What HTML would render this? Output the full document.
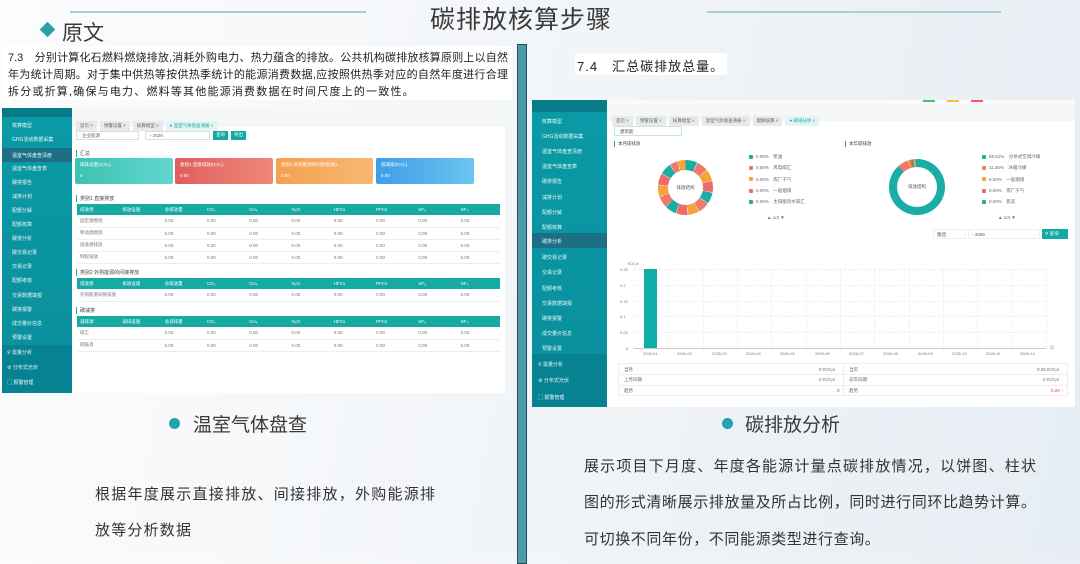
<!DOCTYPE html>
<html><head><meta charset="utf-8"><style>
*{margin:0;padding:0;box-sizing:border-box}
body{width:1080px;height:555px;overflow:hidden;position:relative;font-family:"Liberation Sans","Noto Sans CJK SC",sans-serif;background:linear-gradient(100deg,#fbfcfd 0%,#f2f5f8 50%,#e6edf3 100%);color:#333}
.a{position:absolute}
.j{position:absolute;white-space:nowrap;text-align:justify;text-align-last:justify}
.sb div{position:absolute;left:0;width:100%;font-size:5px;color:#e8f8f8;padding-left:10px;white-space:nowrap}
.tag{display:inline-block;background:#e9e9e9;font-size:4.5px;color:#666;padding:2px 4px;margin-right:3px}
table{border-collapse:collapse;position:absolute;font-size:4.5px;color:#777;table-layout:fixed}
th{background:#15aaa3;color:#fff;font-weight:normal;text-align:left;padding-left:3px;height:11px}
td{border-bottom:1px solid #eee;height:12px;padding-left:3px;background:#fff}
.card{position:absolute;top:158px;height:26px;color:#fff;font-size:4.5px;padding:4px 5px;border-radius:2px}
.lg{position:absolute;font-size:4.5px;color:#666;white-space:nowrap}
.lg i{display:inline-block;width:4px;height:4px;border-radius:1px;margin-right:3px;vertical-align:middle}
.gv{position:absolute;top:269px;height:79px;border-left:1px dashed #eee}
.gh{position:absolute;left:634px;width:412px;border-top:1px dashed #eee}
.yl{position:absolute;left:620px;font-size:4px;color:#777}
.xl{position:absolute;top:351px;font-size:4px;color:#777}
</style></head><body>
<div class="a" style="left:70px;top:11px;width:296px;height:2px;background:#a8ced6"></div>
<div class="a" style="left:707px;top:11px;width:294px;height:2px;background:#a8ced6"></div>
<div class="a" style="left:430px;top:0px;font-size:25px;color:#3a3a3a;letter-spacing:1px">碳排放核算步骤</div>
<div class="a" style="left:42px;top:24px;width:11px;height:11px;background:#2aa1a8;transform:rotate(45deg)"></div>
<div class="a" style="left:62px;top:17px;font-size:21px;color:#3a3a3a">原文</div>
<div class="a" style="left:2px;top:46px;width:510px;height:54px;background:#fff"></div>
<div class="j" style="left:8px;top:49px;width:500px;font-size:11px;color:#222">7.3　分别计算化石燃料燃烧排放,消耗外购电力、热力蕴含的排放。公共机构碳排放核算原则上以自然</div>
<div class="j" style="left:8px;top:66px;width:500px;font-size:11px;color:#222">年为统计周期。对于集中供热等按供热季统计的能源消费数据,应按照供热季对应的自然年度进行合理</div>
<div class="a" style="left:8px;top:83px;font-size:11px;color:#222;letter-spacing:1.2px;white-space:nowrap">拆分或折算,确保与电力、燃料等其他能源消费数据在时间尺度上的一致性。</div>
<div class="a" style="left:575px;top:53px;width:152px;height:22px;background:#fff"></div>
<div class="a" style="left:577px;top:56px;font-size:13px;color:#222;letter-spacing:1px">7.4　汇总碳排放总量。</div>
<div class="a" style="left:517px;top:44px;width:10px;height:520px;background:#4b9ba9;border:1px solid #244f58"></div>

<!-- LEFT APP -->
<div class="a" style="left:2px;top:108px;width:503px;height:285px;background:#fff"></div>
<div class="a sb" style="left:2px;top:108px;width:70px;height:285px;background:linear-gradient(#0a9aa6,#0a8e9c)">
<div style="top:0;height:9px;background:#087b88"></div>
<div style="top:14px">核算模型</div><div style="top:28px">GHG活动数据采集</div>
<div style="top:40px;height:14px;background:#1d6f86;padding-top:4px">温室气体盘查清册</div>
<div style="top:57px">温室气体盘查表</div><div style="top:71px">碳排报告</div><div style="top:85px">减排计划</div><div style="top:99px">配额分解</div><div style="top:113px">配额核算</div><div style="top:127px">碳排分析</div><div style="top:141px">碳交易记录</div><div style="top:155px">交易记录</div><div style="top:169px">配额考核</div><div style="top:184px">交易数据填报</div><div style="top:198px">碳排报警</div><div style="top:212px">成交量价信息</div><div style="top:226px">预警设置</div>
<div style="top:237px;height:48px;background:#078292"></div>
<div style="top:241px;padding-left:5px">⚲ 需量分析</div><div style="top:256px;padding-left:5px">⚙ 分布式光伏</div><div style="top:271px;padding-left:5px">▢ 报警管理</div>
</div>
<div class="a" style="left:72px;top:108px;width:433px;height:19px;background:#f5f6f6;padding:6px 4px"><span class="tag">首页 ×</span><span class="tag">预警设置 ×</span><span class="tag">核算模型 ×</span><span class="tag" style="background:#e2f4f3;color:#1aa">● 温室气体盘查清册 ×</span></div>
<div class="a" style="left:76px;top:131px;width:63px;height:9px;border:1px solid #ddd;font-size:4.5px;color:#666;padding:1px 5px">企业能源</div>
<div class="a" style="left:145px;top:131px;width:65px;height:9px;border:1px solid #ddd;font-size:4.5px;color:#666;padding:1px 4px">▫ 2026</div>
<div class="a" style="left:213px;top:131px;width:15px;height:9px;background:#12a9a1;font-size:4.5px;color:#fff;padding:1px 3px">查询</div>
<div class="a" style="left:231px;top:131px;width:15px;height:9px;background:#12a9a1;font-size:4.5px;color:#fff;padding:1px 3px">导出</div>
<div class="a" style="left:76px;top:150px;font-size:5px;color:#444;border-left:1px solid #1aa;padding-left:3px">汇总</div>
<div class="card" style="left:75px;width:98px;background:linear-gradient(90deg,#3cc2b2,#62d6cf)">碳排总量(tCO₂)<br><br>0</div>
<div class="card" style="left:175px;width:98px;background:linear-gradient(90deg,#e05d5d,#f0887a)">类别1 直接排放(tCO₂)<br><br>0.00</div>
<div class="card" style="left:276px;width:97px;background:linear-gradient(90deg,#f4a04f,#f7b874)">类别2 外购能源的间接排放(t...<br><br>0.00</div>
<div class="card" style="left:376px;width:98px;background:linear-gradient(90deg,#3d9ee8,#6cc4f0)">碳减排(tCO₂)<br><br>0.00</div>
<div class="a" style="left:76px;top:195px;font-size:5px;color:#444;border-left:1px solid #1aa;padding-left:3px">类别1 直接排放</div>
<table style="left:77px;top:204px;width:423px"><tr><th>排放源</th><th>排放设施</th><th>总排放量</th><th>CO₂</th><th>CH₄</th><th>N₂O</th><th>HFCs</th><th>PFCs</th><th>SF₆</th><th>NF₃</th></tr>
<tr><td>固定源燃烧</td><td></td><td>0.00</td><td>0.00</td><td>0.00</td><td>0.00</td><td>0.00</td><td>0.00</td><td>0.00</td><td>0.00</td></tr>
<tr><td>移动源燃烧</td><td></td><td>0.00</td><td>0.00</td><td>0.00</td><td>0.00</td><td>0.00</td><td>0.00</td><td>0.00</td><td>0.00</td></tr>
<tr><td>逃逸源排放</td><td></td><td>0.00</td><td>0.00</td><td>0.00</td><td>0.00</td><td>0.00</td><td>0.00</td><td>0.00</td><td>0.00</td></tr>
<tr><td>制程排放</td><td></td><td>0.00</td><td>0.00</td><td>0.00</td><td>0.00</td><td>0.00</td><td>0.00</td><td>0.00</td><td>0.00</td></tr></table>
<div class="a" style="left:76px;top:269px;font-size:5px;color:#444;border-left:1px solid #1aa;padding-left:3px">类别2 外购能源的间接排放</div>
<table style="left:77px;top:278px;width:423px"><tr><th>排放源</th><th>排放设施</th><th>总排放量</th><th>CO₂</th><th>CH₄</th><th>N₂O</th><th>HFCs</th><th>PFCs</th><th>SF₆</th><th>NF₃</th></tr>
<tr><td>外购能源间接排放</td><td></td><td>0.00</td><td>0.00</td><td>0.00</td><td>0.00</td><td>0.00</td><td>0.00</td><td>0.00</td><td>0.00</td></tr></table>
<div class="a" style="left:76px;top:307px;font-size:5px;color:#444;border-left:1px solid #1aa;padding-left:3px">碳减排</div>
<table style="left:77px;top:316px;width:423px"><tr><th>减排源</th><th>减排设施</th><th>总减排量</th><th>CO₂</th><th>CH₄</th><th>N₂O</th><th>HFCs</th><th>PFCs</th><th>SF₆</th><th>NF₃</th></tr>
<tr><td>碳汇</td><td></td><td>0.00</td><td>0.00</td><td>0.00</td><td>0.00</td><td>0.00</td><td>0.00</td><td>0.00</td><td>0.00</td></tr>
<tr><td>碳抵消</td><td></td><td>0.00</td><td>0.00</td><td>0.00</td><td>0.00</td><td>0.00</td><td>0.00</td><td>0.00</td><td>0.00</td></tr></table>

<!-- RIGHT APP -->
<div class="a" style="left:532px;top:100px;width:543px;height:307px;background:#fff"></div>
<div class="a" style="left:607px;top:100px;width:468px;height:5px;background:#fafafa"></div>
<div class="a" style="left:923px;top:100px;width:12px;height:2px;background:#3c6"></div>
<div class="a" style="left:947px;top:100px;width:12px;height:2px;background:#fb3"></div>
<div class="a" style="left:971px;top:100px;width:12px;height:2px;background:#f55"></div>
<div class="a sb" style="left:532px;top:100px;width:75px;height:307px;background:linear-gradient(#0a9aa6,#0a8e9c)">
<div style="top:0;height:12px;background:#087b88"></div>
<div style="top:18px">核算模型</div><div style="top:33px">GHG活动数据采集</div><div style="top:48px">温室气体盘查清册</div><div style="top:63px">温室气体盘查表</div><div style="top:78px">碳排报告</div><div style="top:94px">减排计划</div><div style="top:109px">配额分解</div><div style="top:124px">配额核算</div>
<div style="top:133px;height:15px;background:#1d6f86;padding-top:5px">碳排分析</div>
<div style="top:154px">碳交易记录</div><div style="top:169px">交易记录</div><div style="top:185px">配额考核</div><div style="top:200px">交易数据填报</div><div style="top:215px">碳排报警</div><div style="top:230px">成交量价信息</div><div style="top:245px">预警设置</div>
<div style="top:254px;height:53px;background:#078292"></div>
<div style="top:261px;padding-left:6px">⚲ 需量分析</div><div style="top:277px;padding-left:6px">⚙ 分布式光伏</div><div style="top:294px;padding-left:6px">▢ 报警管理</div>
</div>
<div class="a" style="left:607px;top:105px;width:468px;height:16px;background:#f5f6f6;padding:4px 5px"><span class="tag">首页 ×</span><span class="tag">预警设置 ×</span><span class="tag">核算模型 ×</span><span class="tag">温室气体盘查清册 ×</span><span class="tag">配额核算 ×</span><span class="tag" style="background:#e2f4f3;color:#1aa">● 碳排分析 ×</span></div>
<div class="a" style="left:614px;top:126px;width:68px;height:10px;border:1px solid #bfe6e6;font-size:4.5px;color:#555;padding:2px 5px">建筑能</div>
<div class="a" style="left:614px;top:141px;font-size:4.5px;color:#444;border-left:1px solid #1aa;padding-left:3px">本月碳排放</div>
<div class="a" style="left:845px;top:141px;font-size:4.5px;color:#444;border-left:1px solid #1aa;padding-left:3px">本年碳排放</div>
<div class="a" style="left:658px;top:160px;width:55px;height:55px;border-radius:50%;background:conic-gradient(#1aada5 0 25deg,#fff 25deg 26deg,#f07a6a 26deg 50deg,#fff 50deg 51deg,#f5a23d 51deg 75deg,#fff 75deg 76deg,#ef6b6b 76deg 100deg,#fff 100deg 101deg,#1aada5 101deg 125deg,#fff 125deg 126deg,#f07a6a 126deg 150deg,#fff 150deg 151deg,#f5a23d 151deg 175deg,#fff 175deg 176deg,#ef6b6b 176deg 200deg,#fff 200deg 201deg,#1aada5 201deg 225deg,#fff 225deg 226deg,#f07a6a 226deg 250deg,#fff 250deg 251deg,#f5a23d 251deg 275deg,#fff 275deg 276deg,#ef6b6b 276deg 300deg,#fff 300deg 301deg,#1aada5 301deg 325deg,#fff 325deg 326deg,#f07a6a 326deg 342deg,#fff 342deg 343deg,#f5a23d 343deg 360deg)"></div>
<div class="a" style="left:668px;top:170px;width:35px;height:35px;border-radius:50%;background:#fff;font-size:4.5px;color:#555;text-align:center;line-height:35px">排放结构</div>
<div class="a" style="left:889px;top:159px;width:56px;height:56px;border-radius:50%;background:conic-gradient(#1aada5 0 318deg,#f07a6a 318deg 340deg,#f5a23d 340deg 344deg,#ef6b6b 344deg 348deg,#1aada5 348deg 351deg,#f07a6a 351deg 354deg,#f5a23d 354deg 357deg,#1aada5 357deg 360deg)"></div>
<div class="a" style="left:897px;top:167px;width:40px;height:40px;border-radius:50%;background:#fff;font-size:4.5px;color:#555;text-align:center;line-height:40px">排放结构</div>
<div class="lg" style="left:749px;top:151px;line-height:11.3px"><i style="background:#1aada5"></i>0.00%　柴油<br><i style="background:#f07a6a"></i>0.00%　风电碳汇<br><i style="background:#f5a23d"></i>0.00%　炼厂干气<br><i style="background:#ef6b6b"></i>0.00%　一般烟煤<br><i style="background:#1aada5"></i>0.00%　太阳能热水碳汇</div>
<div class="lg" style="left:767px;top:215px">▲ 1/3 ▼</div>
<div class="lg" style="left:982px;top:151px;line-height:11.3px"><i style="background:#1aada5"></i>88.61%　分体式空调冷媒<br><i style="background:#f07a6a"></i>11.35%　冰箱冷媒<br><i style="background:#f5a23d"></i>0.00%　一般烟煤<br><i style="background:#ef6b6b"></i>0.00%　炼厂干气<br><i style="background:#1aada5"></i>0.00%　焦炭</div>
<div class="lg" style="left:998px;top:215px">▲ 1/4 ▼</div>
<div class="a" style="left:933px;top:229px;width:33px;height:10px;border:1px solid #eee;font-size:4.5px;color:#555;padding:2px 3px">集团</div>
<div class="a" style="left:968px;top:229px;width:72px;height:10px;border:1px solid #eee;font-size:4.5px;color:#555;padding:2px 3px">▫ 2026</div>
<div class="a" style="left:1042px;top:229px;width:26px;height:10px;background:#12a9a1;font-size:4.5px;color:#fff;padding:2px 3px">⚲ 查询</div>
<div class="a" style="left:628px;top:261px;font-size:4px;color:#777">tCO₂e</div>
<div class="gh" style="top:269px"></div><div class="gh" style="top:285px"></div><div class="gh" style="top:301px"></div><div class="gh" style="top:316px"></div><div class="gh" style="top:332px"></div>
<div class="a" style="left:634px;top:348px;width:412px;height:1px;background:#ccc"></div>
<div class="yl" style="top:267px">0.25</div><div class="yl" style="top:283px">0.2</div><div class="yl" style="top:299px">0.15</div><div class="yl" style="top:314px">0.1</div><div class="yl" style="top:330px">0.05</div><div class="yl" style="top:346px;left:626px">0</div>
<div class="gv" style="left:668px"></div><div class="gv" style="left:703px"></div><div class="gv" style="left:737px"></div><div class="gv" style="left:771px"></div><div class="gv" style="left:806px"></div><div class="gv" style="left:840px"></div><div class="gv" style="left:874px"></div><div class="gv" style="left:909px"></div><div class="gv" style="left:943px"></div><div class="gv" style="left:977px"></div><div class="gv" style="left:1012px"></div><div class="gv" style="left:1046px"></div>
<div class="a" style="left:644px;top:269px;width:13px;height:79px;background:#10aea6"></div>
<div class="xl" style="left:643px">2026-01</div><div class="xl" style="left:677px">2026-02</div><div class="xl" style="left:712px">2026-03</div><div class="xl" style="left:746px">2026-04</div><div class="xl" style="left:780px">2026-05</div><div class="xl" style="left:815px">2026-06</div><div class="xl" style="left:849px">2026-07</div><div class="xl" style="left:883px">2026-08</div><div class="xl" style="left:918px">2026-09</div><div class="xl" style="left:952px">2026-10</div><div class="xl" style="left:986px">2026-11</div><div class="xl" style="left:1020px">2026-12</div>
<div class="xl" style="left:1050px;top:345px">月</div>
<div class="a" style="left:618px;top:363px;width:450px;height:33px;border:1px solid #eee;font-size:4.5px;color:#666">
<div class="a" style="left:224px;top:0;width:1px;height:31px;background:#eee"></div>
<div class="a" style="left:0;top:10px;width:448px;height:1px;background:#eee"></div>
<div class="a" style="left:0;top:21px;width:448px;height:1px;background:#eee"></div>
<div class="a" style="left:5px;top:3px">当月</div><div class="a" style="left:200px;top:3px">0 tCO₂e</div>
<div class="a" style="left:5px;top:13px">上月同期</div><div class="a" style="left:200px;top:13px">0 tCO₂e</div>
<div class="a" style="left:5px;top:24px">趋势</div><div class="a" style="left:218px;top:24px">0</div>
<div class="a" style="left:230px;top:3px">当年</div><div class="a" style="left:418px;top:3px">0.26 tCO₂e</div>
<div class="a" style="left:230px;top:13px">去年同期</div><div class="a" style="left:424px;top:13px">0 tCO₂e</div>
<div class="a" style="left:230px;top:24px">趋势</div><div class="a" style="left:432px;top:24px;color:#e44">0.26 ↑</div>
</div>

<!-- bottom -->
<div class="a" style="left:169px;top:418px;width:11px;height:11px;border-radius:50%;background:#22a3ad"></div>
<div class="a" style="left:193px;top:410px;font-size:19px;color:#3a3a3a">温室气体盘查</div>
<div class="a" style="left:722px;top:418px;width:11px;height:11px;border-radius:50%;background:#22a3ad"></div>
<div class="a" style="left:745px;top:410px;font-size:19px;color:#3a3a3a">碳排放分析</div>
<div class="j" style="left:95px;top:483px;width:340px;font-size:15px;color:#333">根据年度展示直接排放、间接排放，外购能源排</div>
<div class="a" style="left:95px;top:519px;font-size:15px;color:#333;letter-spacing:1.2px">放等分析数据</div>
<div class="j" style="left:584px;top:455px;width:452px;font-size:15px;color:#333">展示项目下月度、年度各能源计量点碳排放情况，以饼图、柱状</div>
<div class="j" style="left:584px;top:491px;width:452px;font-size:15px;color:#333">图的形式清晰展示排放量及所占比例，同时进行同环比趋势计算。</div>
<div class="a" style="left:584px;top:528px;font-size:15px;color:#333;letter-spacing:0.6px">可切换不同年份，不同能源类型进行查询。</div>
</body></html>
